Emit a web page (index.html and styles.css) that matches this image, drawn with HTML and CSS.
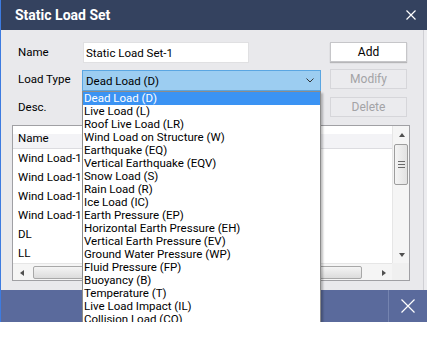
FILE: index.html
```html
<!DOCTYPE html>
<html lang="en">
<head>
  <meta charset="UTF-8" />
  <title>Static Load Set</title>
  <link rel="stylesheet" href="styles.css">
</head>
<body>
  <div class="window">
    <div class="titlebar">
      <span class="title">Static Load Set</span>
      <svg class="close-icon" width="10" height="10" viewBox="0 0 10 10">
        <path d="M0.5 0.5 L9.5 9.5 M9.5 0.5 L0.5 9.5" stroke="#fff" stroke-width="1.2" fill="none"/>
      </svg>
    </div>

    <div class="content">
      <div class="form">
        <label class="lbl">Name</label>
        <div class="field">
          <input class="text-input" type="text" value="Static Load Set-1">
        </div>
        <button class="btn">Add</button>

        <label class="lbl">Load Type</label>
        <div class="field combo-wrap">
          <div class="combo">
            <span>Dead Load (D)</span>
            <svg width="8" height="5" viewBox="0 0 8 5">
              <path d="M0.5 0.5 L4 4 L7.5 0.5" stroke="#333" stroke-width="1" fill="none"/>
            </svg>
          </div>
          <ul class="dropdown">
            <li class="selected">Dead Load (D)</li>
            <li>Live Load (L)</li>
            <li>Roof Live Load (LR)</li>
            <li>Wind Load on Structure (W)</li>
            <li>Earthquake (EQ)</li>
            <li>Vertical Earthquake (EQV)</li>
            <li>Snow Load (S)</li>
            <li>Rain Load (R)</li>
            <li>Ice Load (IC)</li>
            <li>Earth Pressure (EP)</li>
            <li>Horizontal Earth Pressure (EH)</li>
            <li>Vertical Earth Pressure (EV)</li>
            <li>Ground Water Pressure (WP)</li>
            <li>Fluid Pressure (FP)</li>
            <li>Buoyancy (B)</li>
            <li>Temperature (T)</li>
            <li>Live Load Impact (IL)</li>
            <li>Collision Load (CO)</li>
            <li>User Defined Load (USER)</li>
          </ul>
        </div>
        <button class="btn" disabled>Modify</button>

        <label class="lbl">Desc.</label>
        <div class="field"></div>
        <button class="btn" disabled>Delete</button>
      </div>

      <div class="listbox">
        <div class="list-main">
          <div class="list-head">Name</div>
          <div class="list-row">Wind Load-101</div>
          <div class="list-row">Wind Load-102</div>
          <div class="list-row">Wind Load-103</div>
          <div class="list-row">Wind Load-104</div>
          <div class="list-row">DL</div>
          <div class="list-row">LL</div>
          <div class="list-row">LL2</div>
        </div>
        <div class="vscroll">
          <div class="arrow-btn"><span class="tri-up"></span></div>
          <div class="vthumb">
            <span class="grip"></span><span class="grip"></span><span class="grip"></span>
          </div>
          <div class="vspace"></div>
          <div class="arrow-btn"><span class="tri-down"></span></div>
        </div>
        <div class="hscroll">
          <div class="arrow-btn"><span class="tri-left"></span></div>
          <div class="hthumb"></div>
          <div class="hspace"></div>
          <div class="arrow-btn"><span class="tri-right"></span></div>
        </div>
        <div class="corner"></div>
      </div>
    </div>

    <div class="taskbar">
      <div class="task-fill"></div>
      <div class="task-close">
        <svg width="14" height="14" viewBox="0 0 14 14">
          <path d="M0.5 0.5 L13.5 13.5 M13.5 0.5 L0.5 13.5" stroke="#fff" stroke-width="1.2" fill="none"/>
        </svg>
      </div>
    </div>
  </div>
</body>
</html>
```

FILE: styles.css
```css
body {
  margin: 0;
  background: #ffffff;
  font-family: Roboto, "Liberation Sans", sans-serif;
  font-size: 11.5px;
  color: #000;
}

.window {
  width: 427px;
  box-sizing: border-box;
  border-left: 1px solid #3d7be0;
  background: #ececef;
}

.titlebar {
  height: 30px;
  background: #34425f;
  display: flex;
  align-items: center;
  justify-content: space-between;
  padding: 0 11px 0 14px;
}

.title {
  color: #fff;
  font-weight: bold;
  font-size: 14px;
}

.content {
  height: 260px;
  box-sizing: border-box;
  padding: 12px 0 9px 11px;
  margin-right: 3px;
  border-right: 1px solid #cfcfd4;
  background: #e9e9ec;
}

.form {
  display: grid;
  grid-template-columns: 64px 248px 77px;
  grid-template-rows: 27px 28px 21px;
  padding-left: 6px;
}

.lbl {
  line-height: 21px;
}

.field {
  position: relative;
}

.text-input {
  width: 166px;
  height: 21px;
  box-sizing: border-box;
  border: 1px solid #e0e0e2;
  background: #fff;
  font-family: inherit;
  font-size: inherit;
  padding: 0 0 0 2px;
  margin-left: 1px;
  outline: none;
}

.btn {
  width: 77px;
  height: 20px;
  box-sizing: border-box;
  background: #fff;
  border: 1px solid #c6c6c9;
  box-shadow: 0 1px 1px rgba(0, 0, 0, 0.22);
  font-family: inherit;
  font-size: 12px;
  color: #000;
  padding: 0;
}

.btn:disabled {
  background: #ebebee;
  border-color: #d6d6da;
  box-shadow: none;
  color: #a3a3a6;
}

.combo {
  width: 239px;
  height: 21px;
  margin-top: 1px;
  box-sizing: border-box;
  background: #9ccdf1;
  border: 1px solid #5aa6e2;
  display: flex;
  align-items: center;
  justify-content: space-between;
  padding: 0 6px 0 3px;
}

.dropdown {
  position: absolute;
  top: 22px;
  left: 0;
  z-index: 10;
  width: 239px;
  box-sizing: border-box;
  margin: 0;
  padding: 0;
  list-style: none;
  background: #fff;
  border: 1px solid #8c8c8c;
  box-shadow: 2px 2px 2px rgba(0, 0, 0, 0.25);
}

.dropdown li {
  height: 13px;
  line-height: 13px;
  padding-left: 1px;
  white-space: nowrap;
}

.dropdown li.selected {
  background: #3b93f3;
  color: #fff;
}

.listbox {
  margin-top: 7px;
  width: 398px;
  height: 156px;
  box-sizing: border-box;
  border: 1px solid #a0a0a4;
  background: #fff;
  display: grid;
  grid-template-columns: 1fr 17px;
  grid-template-rows: 1fr 17px;
  overflow: hidden;
}

.list-main {
  overflow: hidden;
}

.list-head {
  height: 23px;
  line-height: 25px;
  box-sizing: border-box;
  padding-left: 5px;
  background: linear-gradient(#ffffff 38%, #f3f3f6 38%);
  border-bottom: 1px solid #dcdce0;
}

.list-row {
  height: 19px;
  line-height: 19px;
  padding-left: 5px;
  white-space: nowrap;
}

.vscroll {
  display: flex;
  flex-direction: column;
  background: #f5f5f5;
  border-left: 1px solid #e6e6e6;
}

.hscroll {
  display: flex;
  background: #f5f5f5;
  border-top: 1px solid #e6e6e6;
}

.corner {
  background: #f0f0f0;
}

.arrow-btn {
  width: 17px;
  height: 17px;
  flex: none;
  display: flex;
  align-items: center;
  justify-content: center;
}

.vspace,
.hspace {
  flex: 1;
}

.vthumb {
  margin: 1px 1px 0 1px;
  height: 41px;
  box-sizing: border-box;
  border: 1px solid #9d9d9d;
  border-radius: 2px;
  background: linear-gradient(90deg, #f4f4f4, #e2e2e2);
  display: flex;
  flex-direction: column;
  align-items: center;
  justify-content: center;
  gap: 2px;
}

.grip {
  width: 7px;
  height: 1px;
  background: #6a6a6a;
}

.hthumb {
  margin: 2px 0 1px 3px;
  width: 329px;
  box-sizing: border-box;
  border: 1px solid #a8a8a8;
  border-radius: 2px;
  background: linear-gradient(#f4f4f4, #dcdcdc);
}

.tri-up,
.tri-down,
.tri-left,
.tri-right {
  width: 0;
  height: 0;
  border-style: solid;
}

.tri-up {
  border-width: 0 3.5px 4px 3.5px;
  border-color: transparent transparent #505050 transparent;
}

.tri-down {
  border-width: 4px 3.5px 0 3.5px;
  border-color: #505050 transparent transparent transparent;
}

.tri-left {
  border-width: 3.5px 4px 3.5px 0;
  border-color: transparent #505050 transparent transparent;
}

.tri-right {
  border-width: 3.5px 0 3.5px 4px;
  border-color: transparent transparent transparent #505050;
}

.taskbar {
  height: 32px;
  display: flex;
  background: #5a6a9c;
}

.task-fill {
  flex: 1;
}

.task-close {
  width: 38px;
  border-left: 1px solid #7584b0;
  display: flex;
  align-items: center;
  justify-content: center;
}
```
